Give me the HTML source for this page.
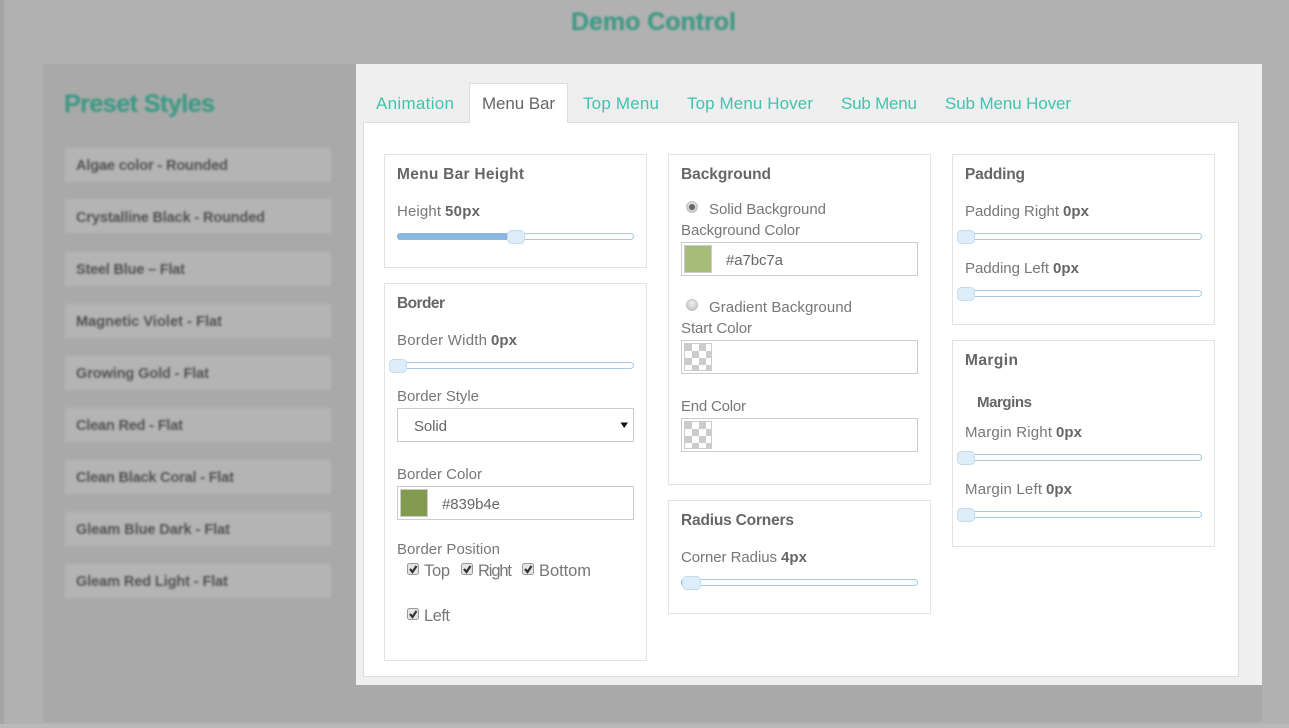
<!DOCTYPE html>
<html><head><meta charset="utf-8"><title>Demo Control</title>
<style>
html,body{margin:0;padding:0;width:1289px;height:728px;overflow:hidden;background:#b9b9b9}
svg{display:block;font-family:"Liberation Sans",Arial,sans-serif}
.l{font-size:15px;fill:#777}
.t{font-size:16.5px;fill:#777}
.v{font-size:15px;fill:#666;font-weight:700}
.h{font-size:15.5px;fill:#666;font-weight:700}
.tab{font-size:17px;fill:#3fc4ae}
.i{font-size:14.5px;fill:#4d4d4d;font-weight:700;stroke:#4d4d4d;stroke-width:.25px}
.g{font-size:25px;fill:#3f9a85;font-weight:700;stroke:#3f9a85;stroke-width:.3px}
.c{fill:#fff;stroke:#e3e3e3;stroke-width:1}
.f{fill:#fff;stroke:#ccc;stroke-width:1}
.tr{fill:#fff;stroke:#a5c9e0;stroke-width:1}
.hd{fill:#deedfa;stroke:#c5dbec;stroke-width:1}
.it{fill:#b4b4b4}
.cb{fill:#e4e4e4;stroke:#9a9a9a;stroke-width:1}
.ck{fill:none;stroke:#333;stroke-width:2.2}
</style></head><body>
<svg width="1289" height="728" viewBox="0 0 1289 728" xmlns="http://www.w3.org/2000/svg">
<defs>
<filter id="b" x="-5%" y="-5%" width="110%" height="110%"><feGaussianBlur stdDeviation="1"/></filter>
<pattern id="chk1" width="14" height="14" patternUnits="userSpaceOnUse" patternTransform="translate(685 344)">
<rect width="14" height="14" fill="#fff"/><rect width="7" height="7" fill="#ccc"/><rect x="7" y="7" width="7" height="7" fill="#ccc"/>
</pattern>
<pattern id="chk2" width="14" height="14" patternUnits="userSpaceOnUse" patternTransform="translate(685 422)">
<rect width="14" height="14" fill="#fff"/><rect width="7" height="7" fill="#ccc"/><rect x="7" y="7" width="7" height="7" fill="#ccc"/>
</pattern>
<radialGradient id="rd" cx=".5" cy=".35" r=".7"><stop offset="0" stop-color="#f2f2f2"/><stop offset="1" stop-color="#bcbcbc"/></radialGradient>
</defs>

<rect width="1289" height="728" fill="#b1b1b1"/>
<rect x="0" y="0" width="4" height="728" fill="#a5a5a5"/>
<rect x="0" y="724" width="1289" height="4" fill="#b9b9b9"/>
<rect x="43" y="64" width="1219" height="658" fill="#a9a9a9"/>
<g filter="url(#b)">
<text class="g" x="571" y="30" textLength="165">Demo Control</text>
<text class="g" x="64" y="112" textLength="151">Preset Styles</text>
<rect class="it" x="65" y="148" width="266" height="34"/>
<rect class="it" x="65" y="199" width="266" height="34"/>
<rect class="it" x="65" y="252" width="266" height="34"/>
<rect class="it" x="65" y="304" width="266" height="34"/>
<rect class="it" x="65" y="356" width="266" height="34"/>
<rect class="it" x="65" y="408" width="266" height="34"/>
<rect class="it" x="65" y="460" width="266" height="34"/>
<rect class="it" x="65" y="512" width="266" height="34"/>
<rect class="it" x="65" y="564" width="266" height="34"/>
<text class="i" x="76" y="170" textLength="152">Algae color - Rounded</text>
<text class="i" x="76" y="222" textLength="189">Crystalline Black - Rounded</text>
<text class="i" x="76" y="274" textLength="109">Steel Blue – Flat</text>
<text class="i" x="76" y="326" textLength="146">Magnetic Violet - Flat</text>
<text class="i" x="76" y="378" textLength="133">Growing Gold - Flat</text>
<text class="i" x="76" y="430" textLength="107">Clean Red - Flat</text>
<text class="i" x="76" y="482" textLength="158">Clean Black Coral - Flat</text>
<text class="i" x="76" y="534" textLength="154">Gleam Blue Dark - Flat</text>
<text class="i" x="76" y="586" textLength="152">Gleam Red Light - Flat</text>
</g>

<!-- modal -->
<rect x="356" y="64" width="906" height="621" fill="#efefef"/>
<rect x="570" y="83" width="101" height="40" fill="#eee"/>
<rect x="570" y="122" width="101" height="2" fill="#ddd"/>
<rect x="363.5" y="122.5" width="875" height="554" fill="#fff" stroke="#ddd"/>
<path d="M469.5 123V83.5H567.5V123" fill="#fff" stroke="#ddd"/>
<rect x="470" y="121" width="97" height="3" fill="#fff"/>
<text class="tab" x="376" y="109" textLength="78">Animation</text>
<text class="tab" style="fill:#666" x="482" y="109" textLength="73">Menu Bar</text>
<text class="tab" x="583" y="109" textLength="76">Top Menu</text>
<text class="tab" x="687" y="109" textLength="126">Top Menu Hover</text>
<text class="tab" x="841" y="109" textLength="76">Sub Menu</text>
<text class="tab" x="945" y="109" textLength="126">Sub Menu Hover</text>

<!-- cards -->
<rect class="c" x="384.5" y="154.5" width="262" height="113"/>
<rect class="c" x="384.5" y="283.5" width="262" height="377"/>
<rect class="c" x="668.5" y="154.5" width="262" height="330"/>
<rect class="c" x="668.5" y="500.5" width="262" height="113"/>
<rect class="c" x="952.5" y="154.5" width="262" height="170"/>
<rect class="c" x="952.5" y="340.5" width="262" height="206"/>

<!-- col 1 -->
<text class="h" x="397" y="179" textLength="127">Menu Bar Height</text>
<text class="l" x="397" y="216" textLength="44">Height</text>
<text class="v" x="445" y="216" textLength="35">50px</text>
<rect class="tr" x="397.5" y="233.5" width="236" height="6" rx="3"/>
<rect x="397" y="233" width="115" height="7" rx="3" fill="#8ab8de"/>
<rect class="hd" x="507.5" y="230.5" width="17" height="13" rx="4"/>

<text class="h" x="397" y="308" textLength="48">Border</text>
<text class="l" x="397" y="345" textLength="90">Border Width</text>
<text class="v" x="491" y="345" textLength="26">0px</text>
<rect class="tr" x="397.5" y="362.5" width="236" height="6" rx="3"/>
<rect class="hd" x="389.5" y="359.5" width="17" height="13" rx="4"/>

<text class="l" x="397" y="401" textLength="82">Border Style</text>
<rect class="f" x="397.5" y="408.5" width="236" height="33"/>
<text class="l" style="fill:#666" x="414" y="431" textLength="33">Solid</text>
<path d="M620.5 422.5H628L624.2 428Z" fill="#111"/>

<text class="l" x="397" y="479" textLength="85">Border Color</text>
<rect class="f" x="397.5" y="486.5" width="236" height="33"/>
<rect x="400.5" y="489.5" width="27" height="27" fill="#839b4e" stroke="#ccc"/>
<text class="l" style="fill:#666" x="442" y="509" textLength="58">#839b4e</text>

<text class="l" x="397" y="554" textLength="103">Border Position</text>
<rect class="cb" x="407.5" y="563.5" width="11" height="11" rx="2"/><path class="ck" d="M410 569l2.5 3 4-6"/>
<rect class="cb" x="461.5" y="563.5" width="11" height="11" rx="2"/><path class="ck" d="M464 569l2.5 3 4-6"/>
<rect class="cb" x="522.5" y="563.5" width="11" height="11" rx="2"/><path class="ck" d="M525 569l2.5 3 4-6"/>
<rect class="cb" x="407.5" y="608.5" width="11" height="11" rx="2"/><path class="ck" d="M410 614l2.5 3 4-6"/>
<text class="t" x="424" y="576" textLength="26">Top</text>
<text class="t" x="478" y="576" textLength="34">Right</text>
<text class="t" x="539" y="576" textLength="52">Bottom</text>
<text class="t" x="424" y="621" textLength="26">Left</text>

<!-- col 2 -->
<text class="h" x="681" y="179" textLength="90">Background</text>
<circle cx="692" cy="207" r="5.5" fill="url(#rd)" stroke="#c4c4c4"/><circle cx="692" cy="207" r="3" fill="#666"/>
<text class="l" x="709" y="214" textLength="117">Solid Background</text>
<text class="l" x="681" y="235" textLength="119">Background Color</text>
<rect class="f" x="681.5" y="242.5" width="236" height="33"/>
<rect x="684.5" y="245.5" width="27" height="27" fill="#a7bc7a" stroke="#ccc"/>
<text class="l" style="fill:#666" x="726" y="265" textLength="57">#a7bc7a</text>

<circle cx="692" cy="305" r="5.5" fill="url(#rd)" stroke="#c4c4c4"/>
<text class="l" x="709" y="312" textLength="143">Gradient Background</text>
<text class="l" x="681" y="333" textLength="71">Start Color</text>
<rect class="f" x="681.5" y="340.5" width="236" height="33"/>
<rect x="684.5" y="343.5" width="27" height="27" fill="url(#chk1)" stroke="#ccc"/>
<text class="l" x="681" y="411" textLength="65">End Color</text>
<rect class="f" x="681.5" y="418.5" width="236" height="33"/>
<rect x="684.5" y="421.5" width="27" height="27" fill="url(#chk2)" stroke="#ccc"/>

<text class="h" x="681" y="525" textLength="113">Radius Corners</text>
<text class="l" x="681" y="562" textLength="96">Corner Radius</text>
<text class="v" x="781" y="562" textLength="26">4px</text>
<rect class="tr" x="681.5" y="579.5" width="236" height="6" rx="3"/>
<rect x="681" y="579" width="6" height="7" rx="3" fill="#8ab8de"/>
<rect class="hd" x="682.5" y="576.5" width="18" height="13" rx="4"/>

<!-- col 3 -->
<text class="h" x="965" y="179" textLength="60">Padding</text>
<text class="l" x="965" y="216" textLength="94">Padding Right</text>
<text class="v" x="1063" y="216" textLength="26">0px</text>
<rect class="tr" x="965.5" y="233.5" width="236" height="6" rx="3"/>
<rect class="hd" x="957.5" y="230.5" width="17" height="13" rx="4"/>
<text class="l" x="965" y="273" textLength="84">Padding Left</text>
<text class="v" x="1053" y="273" textLength="26">0px</text>
<rect class="tr" x="965.5" y="290.5" width="236" height="6" rx="3"/>
<rect class="hd" x="957.5" y="287.5" width="17" height="13" rx="4"/>

<text class="h" x="965" y="365" textLength="53">Margin</text>
<text class="v" x="977" y="407" textLength="55">Margins</text>
<text class="l" x="965" y="437" textLength="87">Margin Right</text>
<text class="v" x="1056" y="437" textLength="26">0px</text>
<rect class="tr" x="965.5" y="454.5" width="236" height="6" rx="3"/>
<rect class="hd" x="957.5" y="451.5" width="17" height="13" rx="4"/>
<text class="l" x="965" y="494" textLength="77">Margin Left</text>
<text class="v" x="1046" y="494" textLength="26">0px</text>
<rect class="tr" x="965.5" y="511.5" width="236" height="6" rx="3"/>
<rect class="hd" x="957.5" y="508.5" width="17" height="13" rx="4"/>
</svg>
</body></html>
